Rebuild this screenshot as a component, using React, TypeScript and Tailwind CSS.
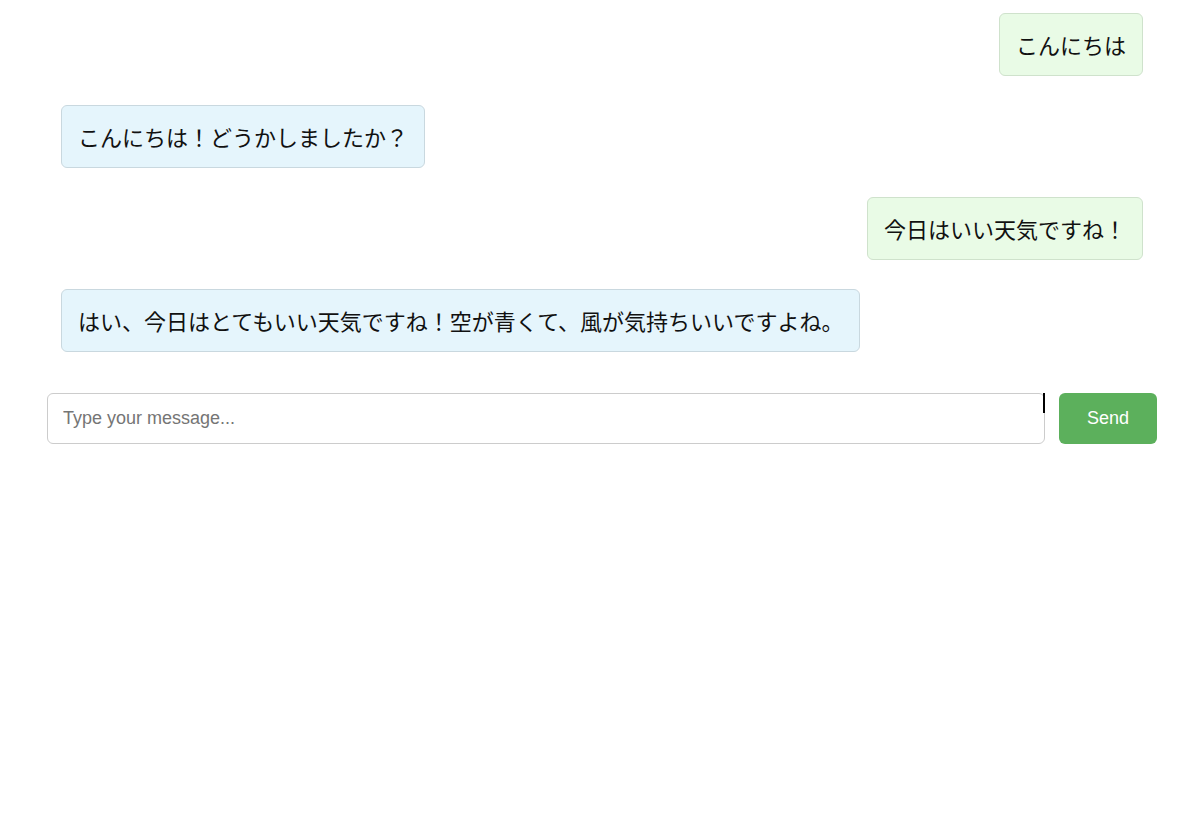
const messages = [
  { from: 'user', text: 'こんにちは' },
  { from: 'bot', text: 'こんにちは！どうかしましたか？' },
  { from: 'user', text: '今日はいい天気ですね！' },
  { from: 'bot', text: 'はい、今日はとてもいい天気ですね！空が青くて、風が気持ちいいですよね。' },
];

function Bubble({ from, text }: { from: string; text: string }) {
  const isUser = from === 'user';
  return (
    <div className={isUser ? 'flex justify-end' : 'flex justify-start'}>
      <div
        className={
          'rounded-[6px] border px-[16px] py-[14px] text-[22px] leading-[33px] text-[#111] ' +
          (isUser ? 'border-[#cfe2cc] bg-[#e9fbe6]' : 'border-[#c9d8df] bg-[#e5f5fc]')
        }
      >
        {text}
      </div>
    </div>
  );
}

export default function App() {
  return (
    <main
      className="min-h-screen bg-white pl-[47px] pr-[43px] pt-[13px]"
      style={{ fontFamily: '"Noto Sans CJK JP", "Liberation Sans", sans-serif' }}
    >
      <div className="flex flex-col gap-[29px] px-[14px]">
        {messages.map((m, i) => (
          <Bubble key={i} from={m.from} text={m.text} />
        ))}
      </div>
      <div className="mt-[41px] flex items-stretch gap-[14px]">
        <div className="relative flex-1">
          <input
            type="text"
            placeholder="Type your message..."
            className="h-[51px] w-full rounded-[6px] border border-[#cccccc] px-[15px] text-[18px] text-[#222] outline-none placeholder:text-[#757575]"
            style={{ fontFamily: '"Liberation Sans", Arial, sans-serif' }}
          />
          <span className="absolute right-0 top-0 h-[20px] w-[2px] bg-black" />
        </div>
        <button
          className="h-[51px] w-[98px] rounded-[6px] bg-[#5cb05c] text-[18px] text-white"
          style={{ fontFamily: '"Liberation Sans", Arial, sans-serif' }}
        >
          Send
        </button>
      </div>
    </main>
  );
}
